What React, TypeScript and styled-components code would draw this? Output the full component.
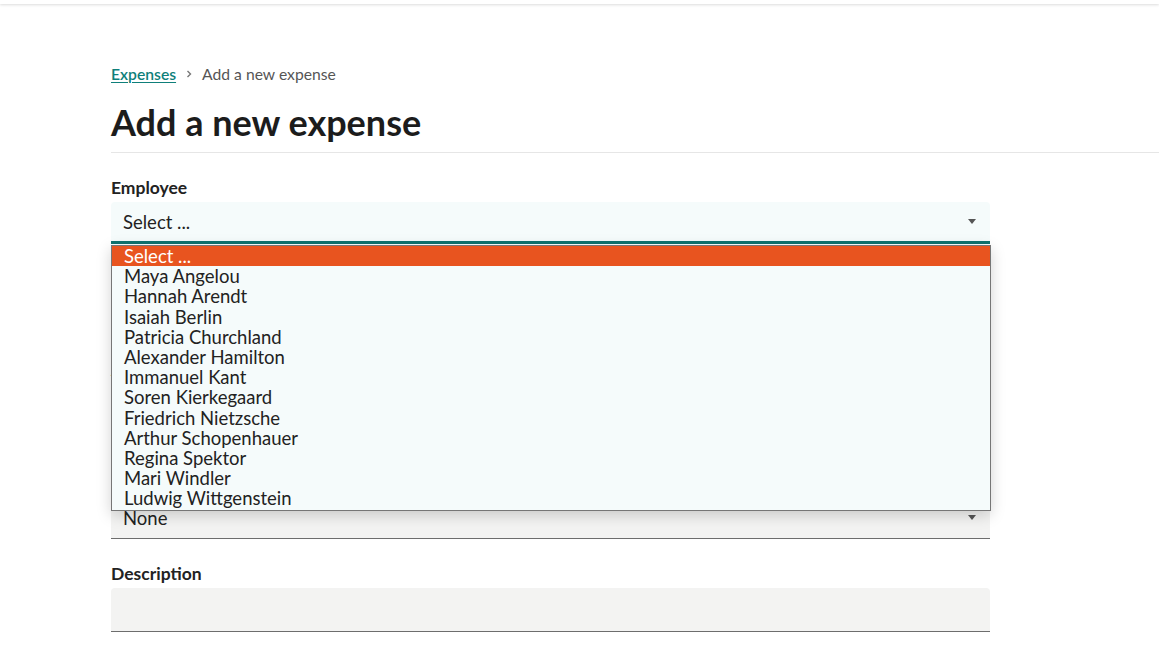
import React from 'react';
import styled, { createGlobalStyle } from 'styled-components';

const GlobalStyle = createGlobalStyle`
  html, body {
    margin: 0;
    padding: 0;
    background: #ffffff;
    font-family: 'Lato', 'Noto Sans', sans-serif;
    color: #222222;
  }
`;

const TopBar = styled.div`
  height: 4px;
  background: #ffffff;
  box-shadow: 0 1px 3px rgba(0, 0, 0, 0.14);
`;

const Page = styled.main`
  padding: 60px 0 40px 111px;
`;

const Breadcrumb = styled.nav`
  display: flex;
  align-items: center;
  gap: 8px;
  font-size: 15.7px;
  color: #555555;
  height: 20px;
`;

const CrumbLink = styled.a`
  color: #0f7f7a;
  text-decoration: underline;
  text-underline-offset: 2px;
  font-weight: 600;
`;

const Header = styled.header`
  border-bottom: 1px solid #e6e6e6;
  padding: 18px 0 9px;
`;

const Title = styled.h1`
  margin: 0;
  font-size: 36px;
  font-weight: 700;
  line-height: 41px;
  color: #1c1c1c;
`;

const Form = styled.form`
  width: 879px;
  display: flex;
  flex-direction: column;
  gap: 24px;
  padding-top: 24px;
  position: relative;
`;

const Field = styled.div`
  display: flex;
  flex-direction: column;
  gap: 3px;
`;

const Label = styled.label`
  font-size: 17.5px;
  font-weight: 700;
  line-height: 22px;
  color: #222222;
`;

const Hint = styled.span`
  font-size: 14px;
  color: #666666;
  line-height: 19px;
`;

const SelectBox = styled.div<{ $active?: boolean }>`
  height: 42px;
  box-sizing: border-box;
  display: flex;
  align-items: center;
  justify-content: space-between;
  padding: 0 14px 0 12px;
  font-size: 18.5px;
  border-radius: 4px 4px 0 0;
  background: ${(p) => (p.$active ? '#f5fbfb' : '#f3f3f2')};
  border-bottom: ${(p) => (p.$active ? '3px solid #0f7470' : '1.5px solid #6d6d6d')};
`;

const Caret = styled.span`
  width: 0;
  height: 0;
  border-left: 4px solid transparent;
  border-right: 4px solid transparent;
  border-top: 5px solid #555555;
`;

const TextArea = styled.div`
  height: 44px;
  box-sizing: border-box;
  border-radius: 4px 4px 0 0;
  background: #f3f3f2;
  border-bottom: 1.5px solid #6d6d6d;
`;

const Dropdown = styled.ul`
  position: absolute;
  top: 92px;
  left: 0;
  width: 880px;
  box-sizing: border-box;
  margin: 0;
  padding: 0 0 1px;
  list-style: none;
  background: #f5fbfb;
  border: 1px solid #767676;
  box-shadow: 0 4px 14px rgba(0, 0, 0, 0.18);
  z-index: 10;
`;

const Option = styled.li<{ $selected?: boolean }>`
  font-size: 18.5px;
  line-height: 20.2px;
  padding-left: 12px;
  background: ${(p) => (p.$selected ? '#e8541f' : 'transparent')};
  color: ${(p) => (p.$selected ? '#ffffff' : '#222222')};
`;

const employees = [
  'Maya Angelou',
  'Hannah Arendt',
  'Isaiah Berlin',
  'Patricia Churchland',
  'Alexander Hamilton',
  'Immanuel Kant',
  'Soren Kierkegaard',
  'Friedrich Nietzsche',
  'Arthur Schopenhauer',
  'Regina Spektor',
  'Mari Windler',
  'Ludwig Wittgenstein',
];

const App: React.FC = () => {
  return (
    <>
      <GlobalStyle />
      <TopBar />
      <Page>
        <Breadcrumb>
          <CrumbLink href="#">Expenses</CrumbLink>
          <svg width="10" height="10" viewBox="0 0 10 10">
            <path d="M3.5 2 L6.5 5 L3.5 8" fill="none" stroke="#777" strokeWidth="1.4" />
          </svg>
          <span>Add a new expense</span>
        </Breadcrumb>
        <Header>
          <Title>Add a new expense</Title>
        </Header>
        <Form>
          <Field>
            <Label>Employee</Label>
            <SelectBox $active>
              <span>Select ...</span>
              <Caret />
            </SelectBox>
          </Field>
          <Field>
            <Label>Date</Label>
            <SelectBox>
              <span />
            </SelectBox>
          </Field>
          <Field>
            <Label>Amount</Label>
            <SelectBox>
              <span />
            </SelectBox>
            <Hint>In euros</Hint>
          </Field>
          <Field>
            <Label>Project</Label>
            <SelectBox>
              <span>None</span>
              <Caret />
            </SelectBox>
          </Field>
          <Field>
            <Label>Description</Label>
            <TextArea />
          </Field>
          <Dropdown>
            <Option $selected>Select ...</Option>
            {employees.map((name) => (
              <Option key={name}>{name}</Option>
            ))}
          </Dropdown>
        </Form>
      </Page>
    </>
  );
};

export default App;
